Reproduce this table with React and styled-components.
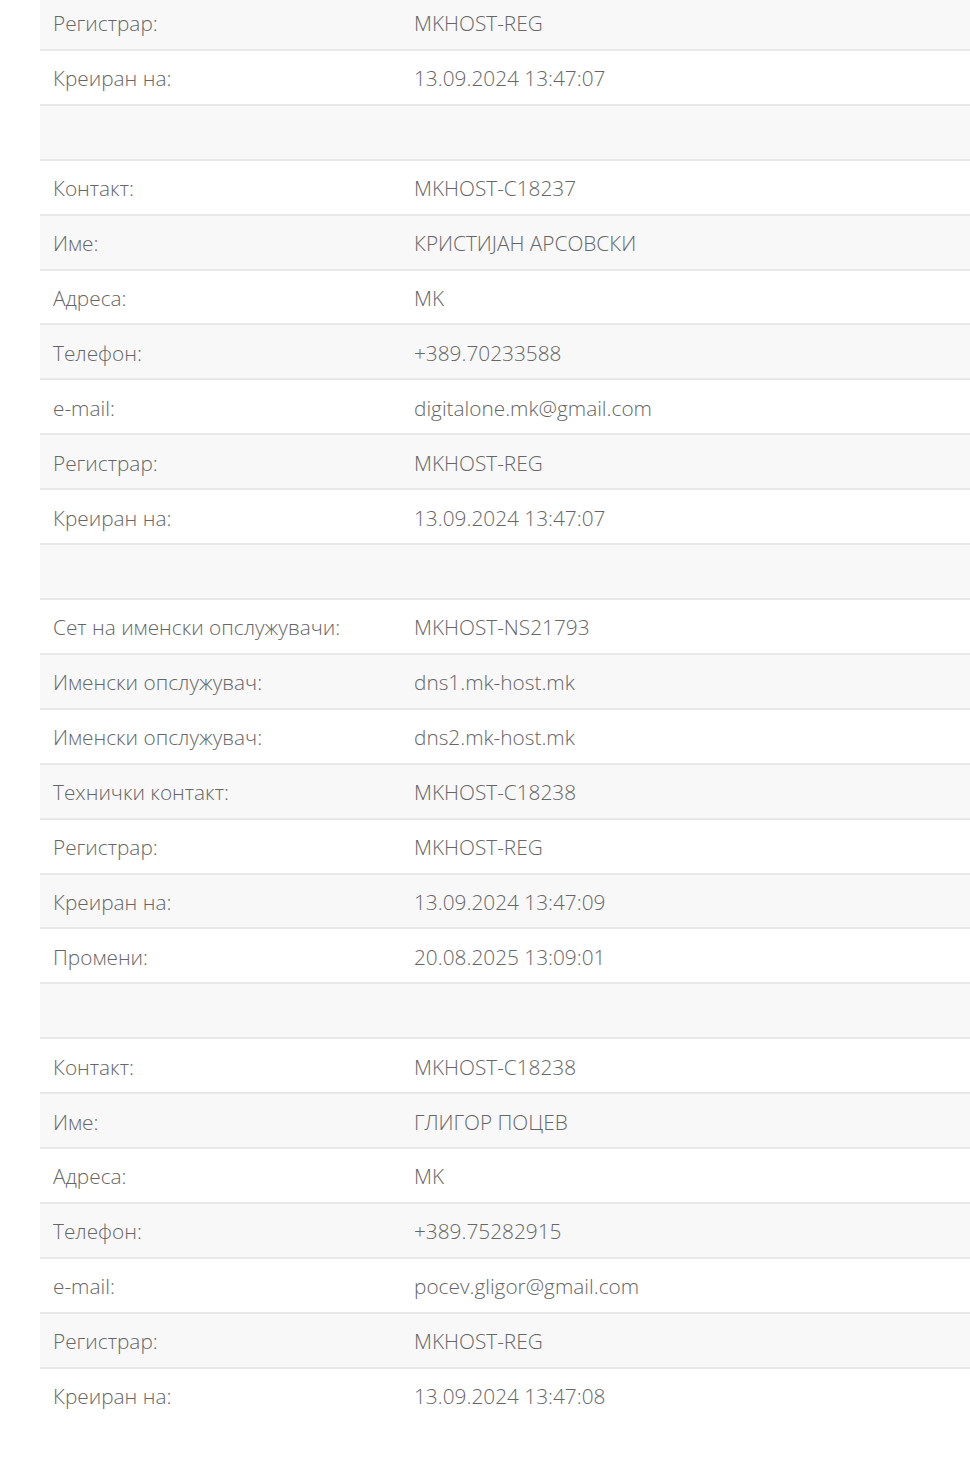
import React from "react";
import styled, { createGlobalStyle } from "styled-components";

const GlobalStyle = createGlobalStyle`
  html, body {
    margin: 0;
    padding: 0;
    background: #ffffff;
    overflow: hidden;
  }
`;

const Page = styled.div`
  width: 970px;
  height: 1464px;
  overflow: hidden;
  font-family: "Open Sans", "Noto Sans", sans-serif;
  font-weight: 300;
`;

const Table = styled.table`
  margin: -4px 0 0 40px;
  width: 930px;
  border-collapse: collapse;
  table-layout: fixed;
  color: #666666;
  font-size: 20.8px;
`;

const Row = styled.tr`
  background: ${(props) => (props.$odd ? "#f8f8f8" : "#ffffff")};
  border-top: ${(props) => (props.$first ? "none" : "2px solid #e8e8e8")};
`;

const Cell = styled.td`
  padding: 2px 13px 0;
  height: 50.92px;
  line-height: 24px;
  vertical-align: middle;
  white-space: nowrap;
  width: ${(props) => props.width || "auto"};
`;

const rows = [
  ["Регистрар:", "MKHOST-REG"],
  ["Креиран на:", "13.09.2024 13:47:07"],
  null,
  ["Контакт:", "MKHOST-C18237"],
  ["Име:", "КРИСТИЈАН АРСОВСКИ"],
  ["Адреса:", "MK"],
  ["Телефон:", "+389.70233588"],
  ["e-mail:", "digitalone.mk@gmail.com"],
  ["Регистрар:", "MKHOST-REG"],
  ["Креиран на:", "13.09.2024 13:47:07"],
  null,
  ["Сет на именски опслужувачи:", "MKHOST-NS21793"],
  ["Именски опслужувач:", "dns1.mk-host.mk"],
  ["Именски опслужувач:", "dns2.mk-host.mk"],
  ["Технички контакт:", "MKHOST-C18238"],
  ["Регистрар:", "MKHOST-REG"],
  ["Креиран на:", "13.09.2024 13:47:09"],
  ["Промени:", "20.08.2025 13:09:01"],
  null,
  ["Контакт:", "MKHOST-C18238"],
  ["Име:", "ГЛИГОР ПОЦЕВ"],
  ["Адреса:", "MK"],
  ["Телефон:", "+389.75282915"],
  ["e-mail:", "pocev.gligor@gmail.com"],
  ["Регистрар:", "MKHOST-REG"],
  ["Креиран на:", "13.09.2024 13:47:08"],
];

export default function App() {
  return (
    <Page>
      <GlobalStyle />
      <Table>
        <tbody>
          {rows.map((row, i) => (
            <Row key={i} $odd={i % 2 === 0} $first={i === 0}>
              <Cell width="335px">{row ? row[0] : "\u00a0"}</Cell>
              <Cell>{row ? row[1] : "\u00a0"}</Cell>
            </Row>
          ))}
        </tbody>
      </Table>
    </Page>
  );
}
